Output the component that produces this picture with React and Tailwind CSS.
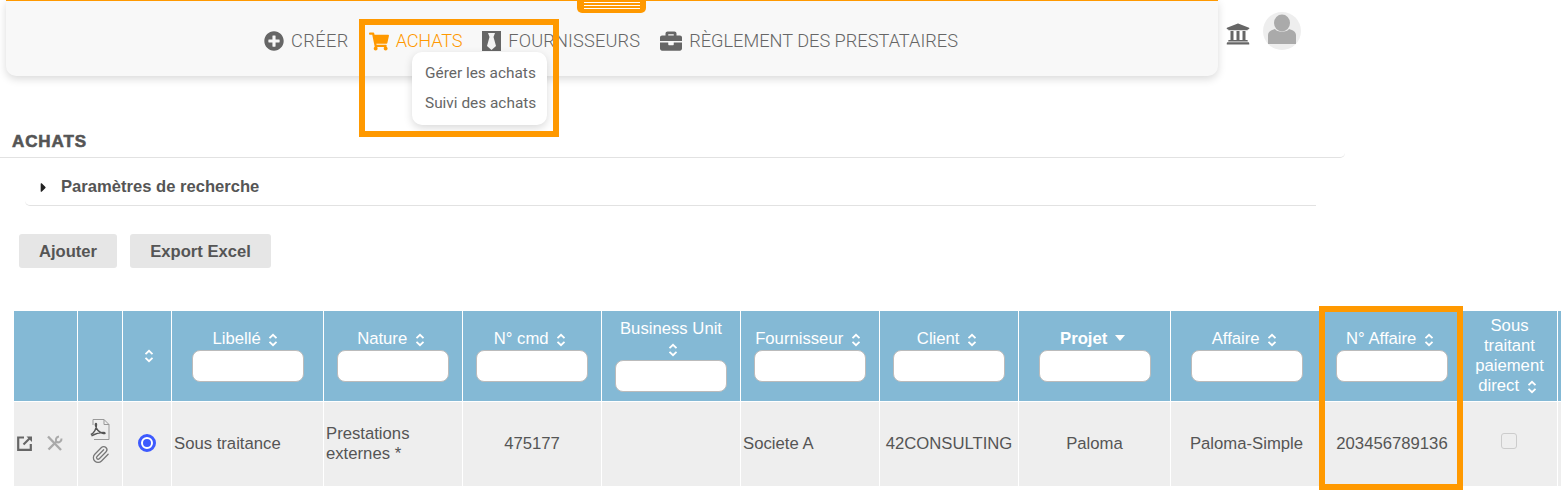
import React from 'react'
import { FaPlusCircle, FaShoppingCart, FaBriefcase, FaUniversity, FaCaretRight } from 'react-icons/fa'
import { Paperclip } from 'lucide-react'

function SortIcon({ className = '' }) {
  return (
    <svg viewBox="0 0 10 14" className={`inline-block w-[10px] h-[14px] ${className}`} fill="none" stroke="currentColor" strokeWidth="1.8">
      <path d="M1.500 5.200 5 1.800 8.500 5.200" />
      <path d="M1.500 8.800 5 12.200 8.500 8.800" />
    </svg>
  )
}

function TieIcon() {
  return (
    <svg viewBox="0 0 19 20" className="w-[19px] h-[20px]">
      <rect width="19" height="20" fill="#666" />
      <path d="M6 2h7l-1.500 4 2.500 9-4.500 4-4.500-4 2.500-9z" fill="#f4f4f4" />
    </svg>
  )
}

function ExternalIcon() {
  return (
    <svg viewBox="0 0 16 16" className="w-[16px] h-[16px]" fill="none" stroke="#666" strokeWidth="2.200">
      <path d="M7 2.500H1.200v12.300h12.600V9" />
      <path d="M6.500 9.500 13.500 2.500" />
      <path d="M9.500 1.500h5.500v5.500z" fill="#666" stroke="none" />
    </svg>
  )
}

function ToolsIcon() {
  return (
    <svg viewBox="0 0 17 17" className="w-[17px] h-[17px]" fill="none" stroke="#aaa" strokeWidth="2.400">
      <path d="M2 1.500 15 15" />
      <path d="M2.500 14.500 11 6" />
      <path d="M15.500 3.500a3.500 3.500 0 0 1-5 3.500 3.500 3.500 0 0 1 2.500-5.500" strokeWidth="2" />
    </svg>
  )
}

function PdfIcon() {
  return (
    <svg viewBox="0 0 20 21" className="w-[20px] h-[21px]" fill="none">
      <path d="M3 6V.5h11l5 5v15H4" stroke="#999" strokeWidth="1" />
      <path d="M14 .5v5h5" stroke="#999" strokeWidth="1" />
      <path d="M.800 15.500c3-1 6-6 5.700-10-.200-2-1.500-1-1 1 .800 3.500 3.500 7 8 8 2 .400 2-1 0-1-3.500 0-8 1-12 3.500" stroke="#555" strokeWidth="1.400" />
    </svg>
  )
}

function AvatarIcon() {
  return (
    <svg viewBox="0 0 38 38" className="w-[38px] h-[38px]">
      <circle cx="19" cy="19" r="19" fill="#eee" />
      <ellipse cx="19" cy="11" rx="8" ry="8.500" fill="#aaa" />
      <path d="M5 32v-9c0-3 3-5 7-6 2 3.500 12 3.500 14 0 4 1 7 3 7 6v9z" fill="#aaa" />
    </svg>
  )
}

function NavItem({ icon, label, active, labelClass = '' }) {
  return (
    <div className={`flex items-center gap-[7px] ${active ? 'text-[#ff9900]' : 'text-[#666]'}`}>
      {icon}
      <span className={labelClass}>{label}</span>
    </div>
  )
}

function HeadCell({ label, bold, filter = true, caret, wrap }) {
  return (
    <div className={`bg-[#84b9d5] flex flex-col items-center justify-center text-white text-[16.7px] leading-[20px] text-center ${wrap ? 'px-[14px]' : 'px-[4px]'} ${filter ? 'pb-[2px]' : ''}`}>
      <div className={`mb-[1px] ${bold ? 'font-bold' : ''}`}>
        {label}{' '}
        {caret ? (
          <svg viewBox="0 0 10 6" className="inline-block ml-[3px] mr-[4px] w-[10px] h-[6px] mb-[3px]"><path d="M0 0h10L5 6z" fill="#fff" /></svg>
        ) : (
          <SortIcon className={`ml-[3px] mb-[-2px] ${wrap ? '' : 'mr-[4px]'}`} />
        )}
      </div>
      {filter && <input className="w-[112px] h-[32px] bg-white border border-[#bbb] rounded-[8px]" />}
    </div>
  )
}

function BodyCell({ children, left }) {
  return (
    <div className={`bg-[#eee] flex items-center text-[#555] text-[16.7px] leading-[20px] ${left ? 'justify-start pl-[2px]' : 'justify-center text-center'}`}>
      {children}
    </div>
  )
}

const gridCols = 'grid-cols-[63px_44px_48px_151px_138px_138px_138px_138px_138px_151px_151px_138px_95px_20px]'

export default function App() {
  return (
    <div className="relative w-[1561px] h-[490px] overflow-hidden bg-white font-['Liberation_Sans',sans-serif]">
      {/* top nav */}
      <div className="flex items-start">
        <div className="relative ml-[6px] w-[1212px] h-[76px] bg-[#f8f8f8] border-t border-[#ff9900] rounded-b-[10px] shadow-[0_3px_8px_rgba(0,0,0,0.15)]">
          <div className="absolute left-[571px] top-0 w-[69px] h-[12px] bg-[#ff9900] rounded-b-[5px] flex flex-col items-center gap-[2px]">
            <div className="w-[56px] h-px bg-white mt-[1px]" />
            <div className="w-[56px] h-px bg-white" />
            <div className="w-[56px] h-px bg-white" />
          </div>
          <div className="flex justify-center gap-[20px] pt-[29px] pr-[2px] text-[18.2px] leading-[20px] font-['Roboto',sans-serif] font-light">
            <NavItem icon={<FaPlusCircle className="w-[20px] h-[20px]" />} label="CRÉER" labelClass="tracking-[0.4px]" />
            <NavItem icon={<FaShoppingCart className="w-[20px] h-[19px]" />} label="ACHATS" active labelClass="tracking-[-0.2px]" />
            <NavItem icon={<TieIcon />} label="FOURNISSEURS" labelClass="tracking-[0.15px]" />
            <NavItem icon={<FaBriefcase className="w-[22px] h-[22px]" />} label="RÈGLEMENT DES PRESTATAIRES" />
          </div>
          <div className="absolute left-[406px] top-[51px] w-[135px] h-[73px] bg-white rounded-[10px] shadow-[0_3px_8px_rgba(0,0,0,0.15)] pt-[6px] pl-[13px] text-[15.4px] leading-[30px] text-[#666] font-['Roboto',sans-serif]">
            <div>Gérer les achats</div>
            <div>Suivi des achats</div>
          </div>
        </div>
        <FaUniversity className="ml-[8px] mt-[22px] w-[24px] h-[24px] text-[#666]" />
        <div className="ml-[13px] mt-[12px]">
          <AvatarIcon />
        </div>
      </div>

      {/* title + search */}
      <div className="mt-[55px] w-[1345px] h-[27px] pl-[12px] pt-[1px] border-b border-[#e2e2e2] rounded-br-[5px] text-[17px] tracking-[0.9px] leading-[20px] font-bold text-[#555] [-webkit-text-stroke:0.6px_#555]">ACHATS</div>
      <div className="ml-[25px] w-[1291px] h-[48px] border-b border-[#e2e2e2] rounded-bl-[5px] flex items-center pt-[12px] pl-[11px] text-[#555] font-bold text-[16.6px]">
        <FaCaretRight className="w-[15px] h-[15px] text-[#222] mr-[10px]" />
        Paramètres de recherche
      </div>

      {/* actions */}
      <div className="mt-[28px] ml-[19px] flex gap-[13px] text-[16.6px] font-bold text-[#555]">
        <button className="w-[98px] h-[34px] pt-[2px] bg-[#e6e6e6] rounded-[3px]">Ajouter</button>
        <button className="w-[141px] h-[34px] pt-[2px] bg-[#e6e6e6] rounded-[3px]">Export Excel</button>
      </div>

      {/* table */}
      <div className={`mt-[43px] ml-[14px] grid ${gridCols} grid-rows-[90px_84px] gap-[1px]`}>
        <div className="bg-[#84b9d5]" />
        <div className="bg-[#84b9d5]" />
        <div className="bg-[#84b9d5] flex items-center justify-center text-white pl-[3px]"><SortIcon /></div>
        <HeadCell label="Libellé" />
        <HeadCell label="Nature" />
        <HeadCell label="N° cmd" />
        <HeadCell label="Business Unit" wrap />
        <HeadCell label="Fournisseur" />
        <HeadCell label="Client" />
        <HeadCell label="Projet" bold caret />
        <HeadCell label="Affaire" />
        <HeadCell label="N° Affaire" />
        <HeadCell label="Sous traitant paiement direct" filter={false} />
        <div className="bg-[#84b9d5]" />

        <div className="bg-[#eee] flex items-center gap-[13px] pl-[3px] pb-[2px]">
          <ExternalIcon />
          <ToolsIcon />
        </div>
        <div className="bg-[#eee] flex flex-col items-center justify-center gap-[5px] pb-[6px]">
          <PdfIcon />
          <Paperclip className="w-[19px] h-[19px] text-[#777]" strokeWidth={1.6} />
        </div>
        <div className="bg-[#eee] flex items-center justify-center pb-[3px]">
          <div className="w-[18px] h-[18px] rounded-full border-[3px] border-[#3d5afe] bg-white flex items-center justify-center">
            <div className="w-[8px] h-[8px] rounded-full bg-[#3d5afe]" />
          </div>
        </div>
        <BodyCell left>Sous traitance</BodyCell>
        <BodyCell left>Prestations externes *</BodyCell>
        <BodyCell>475177</BodyCell>
        <BodyCell />
        <BodyCell left>Societe A</BodyCell>
        <BodyCell>42CONSULTING</BodyCell>
        <BodyCell>Paloma</BodyCell>
        <BodyCell>Paloma-Simple</BodyCell>
        <BodyCell>203456789136</BodyCell>
        <BodyCell>
          <div className="w-[16px] h-[16px] mb-[6px] mr-[1px] rounded-[3px] border border-[#ccc] bg-[#eee]" />
        </BodyCell>
        <div className="bg-[#eee]" />
      </div>

      {/* annotation boxes */}
      <div className="absolute left-[359px] top-[19px] w-[200px] h-[118px] border-[6px] border-[#ff9900]" />
      <div className="absolute left-[1319px] top-[306px] w-[144px] h-[184px] border-[6px] border-[#ff9900]" />
    </div>
  )
}
